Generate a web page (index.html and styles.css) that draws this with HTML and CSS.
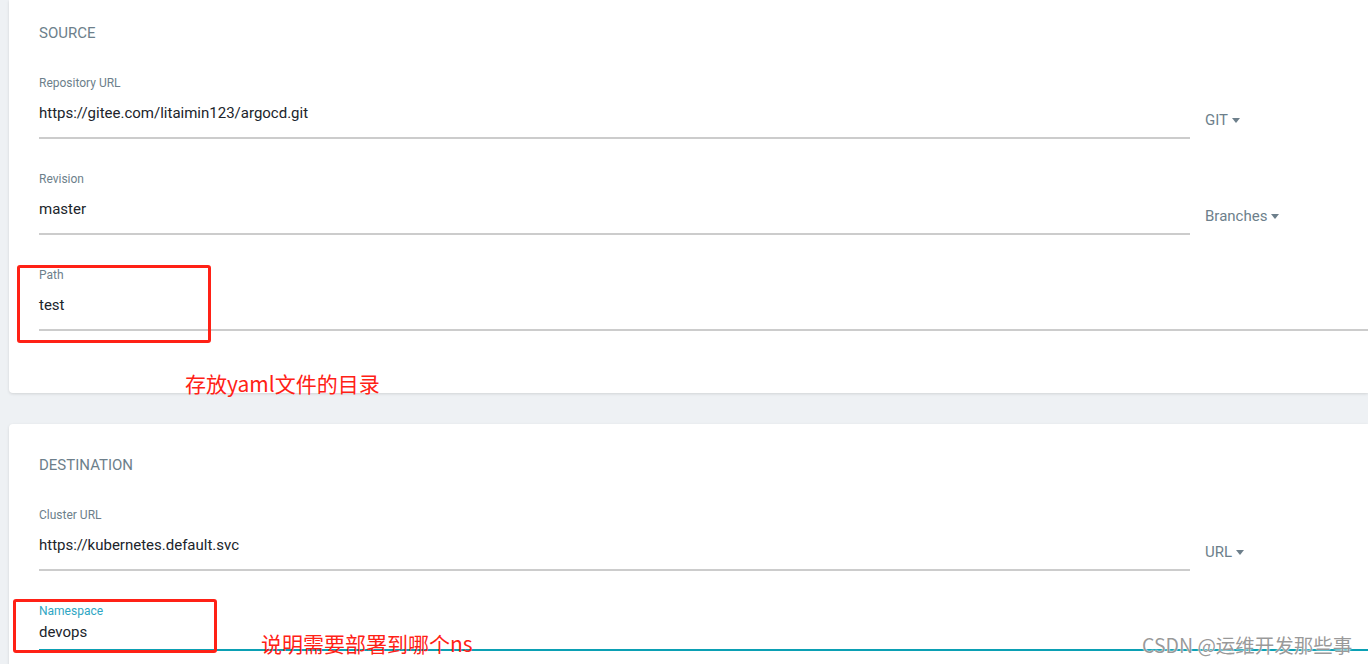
FILE: index.html
```html
<!DOCTYPE html>
<html lang="zh">
<head>
<meta charset="utf-8">
<title>Argo CD - New App</title>
<link rel="stylesheet" href="styles.css">
</head>
<body>
<div class="page">
  <section class="card card-source">
    <h3 class="card-title">SOURCE</h3>
    <div class="fields">
      <div class="row">
        <div class="field">
          <label class="field-label">Repository URL</label>
          <div class="field-input">https://gitee.com/litaimin123/argocd.git</div>
        </div>
        <div class="dropdown">GIT <span class="caret"></span></div>
      </div>
      <div class="row">
        <div class="field">
          <label class="field-label">Revision</label>
          <div class="field-input">master</div>
        </div>
        <div class="dropdown">Branches <span class="caret"></span></div>
      </div>
      <div class="row">
        <div class="field field-wide">
          <label class="field-label">Path</label>
          <div class="field-input">test</div>
        </div>
      </div>
    </div>
  </section>

  <section class="card card-dest">
    <h3 class="card-title">DESTINATION</h3>
    <div class="fields">
      <div class="row">
        <div class="field">
          <label class="field-label">Cluster URL</label>
          <div class="field-input">https://kubernetes.default.svc</div>
        </div>
        <div class="dropdown">URL <span class="caret"></span></div>
      </div>
      <div class="row">
        <div class="field field-wide field-focused">
          <label class="field-label">Namespace</label>
          <div class="field-input">devops</div>
        </div>
      </div>
    </div>
  </section>

  <div class="mark mark-path"></div>
  <div class="note note-path">存放yaml文件的目录</div>
  <div class="mark mark-ns"></div>
  <div class="note note-ns">说明需要部署到哪个ns</div>
  <div class="watermark">CSDN @运维开发那些事</div>
</div>
</body>
</html>
```

FILE: styles.css
```css
html, body {
  margin: 0;
  padding: 0;
  height: 100%;
  overflow: hidden;
}

body {
  background: #eef1f4;
  font-family: Roboto, "Liberation Sans", "Noto Sans CJK SC", sans-serif;
}

.page {
  position: relative;
  padding-left: 9px;
  height: 664px;
}

.card {
  background: #ffffff;
  border-radius: 4px 0 0 4px;
  box-shadow: 0 1px 3px rgba(0, 0, 0, 0.12);
  padding-left: 30px;
}

.card-source {
  padding-top: 23px;
  padding-bottom: 62px;
  border-radius: 0 0 0 4px;
}

.card-dest {
  margin-top: 31px;
  padding-top: 31px;
  padding-bottom: 40px;
}

.card-title {
  margin: 0 0 33px 0;
  font-size: 15px;
  line-height: 20px;
  font-weight: 400;
  color: #6d7f8b;
}

.fields {
  display: flex;
  flex-direction: column;
  gap: 33px;
}

.row {
  display: flex;
  align-items: flex-end;
}

.field {
  flex: 0 0 1151px;
  border-bottom: 2px solid #cccccc;
}

.field-wide {
  flex: 1 1 auto;
}

.field-label {
  display: block;
  font-size: 12px;
  line-height: 14px;
  color: #6d7f8b;
}

.field-input {
  margin-top: 13px;
  padding-bottom: 14px;
  font-size: 15px;
  line-height: 20px;
  color: #20242b;
}

.field-focused {
  border-bottom-color: #0ba0b4;
}

.field-focused .field-label {
  color: #2ea6c3;
}

.field-focused .field-input {
  margin-top: 4px;
  padding-bottom: 7px;
}

.dropdown {
  margin-left: 15px;
  padding-bottom: 9px;
  font-size: 15px;
  line-height: 20px;
  color: #6d7f8b;
  display: flex;
  align-items: center;
  gap: 4px;
}

.caret {
  width: 0;
  height: 0;
  border-left: 4.5px solid transparent;
  border-right: 4.5px solid transparent;
  border-top: 5px solid #6d7f8b;
  margin-top: 1px;
}

.mark {
  position: absolute;
  box-sizing: border-box;
  border: 3px solid #ff2116;
  border-radius: 3px;
}

.mark-path {
  left: 17px;
  top: 265px;
  width: 194px;
  height: 78px;
}

.mark-ns {
  left: 13px;
  top: 599px;
  width: 204px;
  height: 54px;
}

.note {
  position: absolute;
  font-family: "Noto Sans CJK SC", "Liberation Sans", sans-serif;
  font-size: 21px;
  line-height: 24px;
  color: #ff2116;
  white-space: nowrap;
}

.note-path {
  left: 185px;
  top: 371px;
}

.note-ns {
  left: 261px;
  top: 631px;
}

.watermark {
  position: absolute;
  left: 1142px;
  top: 632px;
  font-family: "Noto Sans CJK SC", "Liberation Sans", sans-serif;
  font-size: 19.5px;
  line-height: 26px;
  color: rgba(120, 120, 120, 0.75);
  white-space: nowrap;
  text-shadow: 0 0 2px #ffffff, 0 0 1px #ffffff;
}
```
